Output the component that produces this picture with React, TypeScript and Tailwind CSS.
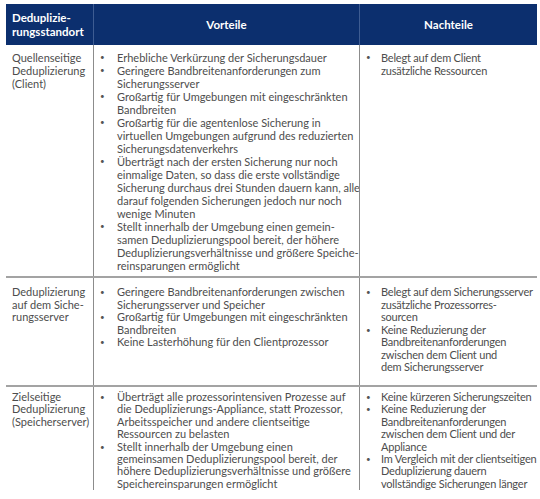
import React from "react";

type Row = {
  left: string[];
  mid: string[][];
  right: string[][];
  pt: string;
  h: string;
  lh: string;
};

const rows: Row[] = [
  {
    left: ["Quellenseitige", "Deduplizierung", "(Client)"],
    mid: [
      ["Erhebliche Verkürzung der Sicherungsdauer"],
      ["Geringere Bandbreitenanforderungen zum", "Sicherungsserver"],
      ["Großartig für Umgebungen mit eingeschränkten", "Bandbreiten"],
      [
        "Großartig für die agentenlose Sicherung in",
        "virtuellen Umgebungen aufgrund des reduzierten",
        "Sicherungsdatenverkehrs",
      ],
      [
        "Überträgt nach der ersten Sicherung nur noch",
        "einmalige Daten, so dass die erste vollständige",
        "Sicherung durchaus drei Stunden dauern kann, alle",
        "darauf folgenden Sicherungen jedoch nur noch",
        "wenige Minuten",
      ],
      [
        "Stellt innerhalb der Umgebung einen gemein-",
        "samen Deduplizierungspool bereit, der höhere",
        "Deduplizierungsverhältnisse und größere Speiche-",
        "reinsparungen ermöglicht",
      ],
    ],
    right: [["Belegt auf dem Client", "zusätzliche Ressourcen"]],
    pt: "pt-[6px]",
    h: "h-[231px]",
    lh: "leading-[13px]",
  },
  {
    left: ["Deduplizierung", "auf dem Siche-", "rungsserver"],
    mid: [
      ["Geringere Bandbreitenanforderungen zwischen", "Sicherungsserver und Speicher"],
      ["Großartig für Umgebungen mit eingeschränkten", "Bandbreiten"],
      ["Keine Lasterhöhung für den Clientprozessor"],
    ],
    right: [
      ["Belegt auf dem Sicherungsserver", "zusätzliche Prozessorres-", "sourcen"],
      [
        "Keine Reduzierung der",
        "Bandbreitenanforderungen",
        "zwischen dem Client und",
        "dem Sicherungsserver",
      ],
    ],
    pt: "pt-[8px]",
    h: "h-[107px]",
    lh: "leading-[12.5px]",
  },
  {
    left: ["Zielseitige", "Deduplizierung", "(Speicherserver)"],
    mid: [
      [
        "Überträgt alle prozessorintensiven Prozesse auf",
        "die Deduplizierungs-Appliance, statt Prozessor,",
        "Arbeitsspeicher und andere clientseitige",
        "Ressourcen zu belasten",
      ],
      [
        "Stellt innerhalb der Umgebung einen",
        "gemeinsamen Deduplizierungspool bereit, der",
        "höhere Deduplizierungsverhältnisse und größere",
        "Speichereinsparungen ermöglicht",
      ],
    ],
    right: [
      ["Keine kürzeren Sicherungszeiten"],
      [
        "Keine Reduzierung der",
        "Bandbreitenanforderungen",
        "zwischen dem Client und der",
        "Appliance",
      ],
      [
        "Im Vergleich mit der clientseitigen",
        "Deduplizierung dauern",
        "vollständige Sicherungen länger",
      ],
    ],
    pt: "pt-[4px]",
    h: "h-[102px]",
    lh: "leading-[12.4px]",
  },
];

function Bullets({
  items,
  lh,
  textOffset,
  tracking,
}: {
  items: string[][];
  lh: string;
  textOffset: string;
  tracking: string;
}) {
  return (
    <div className="flex flex-col">
      {items.map((lines, i) => (
        <div key={i} className={`flex ${lh}`}>
          <span className={`${textOffset} shrink-0 pl-[6px] text-[8px] text-[#555]`}>•</span>
          <div className={`whitespace-nowrap ${tracking}`}>
            {lines.map((l, j) => (
              <div key={j}>{l}</div>
            ))}
          </div>
        </div>
      ))}
    </div>
  );
}

export default function App() {
  return (
    <div
      className="w-[540px] h-[499px] bg-white pt-[4px] pl-[6px] text-[#4d4d4d] text-[11px]"
      style={{ fontFamily: "Lato, 'Open Sans', sans-serif" }}
    >
      <div className="w-[531px]">
        <div className="grid grid-cols-[87px_266px_178px] h-[41px] bg-[#0c2f6e] text-white font-bold text-[11.5px] leading-[13.5px]">
          <div className="flex items-center pl-[6px]">
            <div>
              Deduplizie-
              <br />
              rungsstandort
            </div>
          </div>
          <div className="flex items-center justify-center border-l border-[#3e5c92]">Vorteile</div>
          <div className="flex items-center justify-center border-l border-[#3e5c92]">Nachteile</div>
        </div>
        {rows.map((r, i) => (
          <div key={i}>
            <div className={`grid grid-cols-[87px_266px_178px] ${r.h} ${r.lh}`}>
              <div className={`${r.pt} pl-[6px] whitespace-nowrap`}>
                {r.left.map((l, j) => (
                  <div key={j}>{l}</div>
                ))}
              </div>
              <div className={`${r.pt} border-l border-[#8c8c8c]`}>
                <Bullets items={r.mid} lh={r.lh} textOffset="w-[23px]" tracking="tracking-normal" />
              </div>
              <div className={`${r.pt} border-l border-[#8c8c8c]`}>
                <Bullets items={r.right} lh={r.lh} textOffset="w-[21px]" tracking="tracking-[-0.2px]" />
              </div>
            </div>
            {i < rows.length - 1 && <div className="h-[2px] bg-[#a3a3a3]" />}
          </div>
        ))}
      </div>
    </div>
  );
}
